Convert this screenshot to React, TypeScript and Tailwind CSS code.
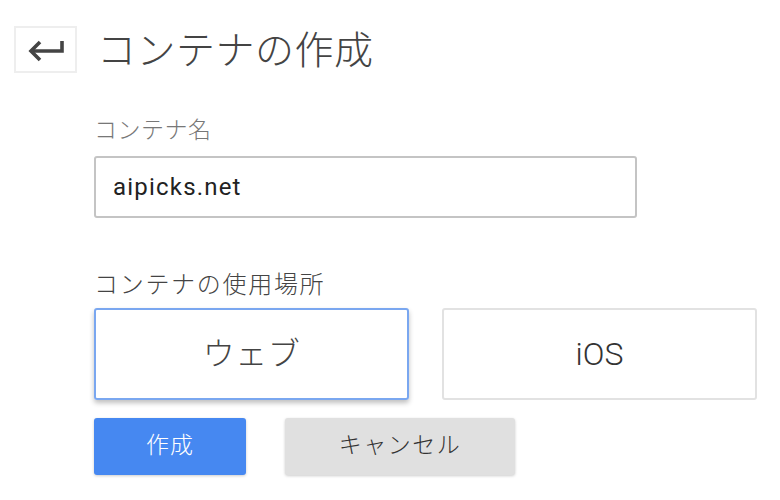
import React from "react";

export default function App() {
  return (
    <div
      className="w-[780px] h-[500px] bg-white overflow-hidden font-light"
      style={{ fontFamily: 'Roboto, "Noto Sans CJK JP", sans-serif' }}
    >
      <div className="flex items-center pt-[26px] pl-[14px]">
        <button className="w-[63px] h-[47px] border-2 border-[#eeeeee] bg-white flex items-center justify-center">
          <svg width="38" height="24" viewBox="0 0 38 24" fill="none">
            <path d="M35 3 V13 H5" stroke="#444" strokeWidth="3.6" strokeLinecap="butt" />
            <path d="M13 4 L4 13 L13 22" stroke="#444" strokeWidth="3.6" strokeLinecap="butt" strokeLinejoin="miter" fill="none" />
          </svg>
        </button>
        <h1 className="ml-[20px] mt-[4px] text-[39px] leading-none text-[#444] tracking-[0.5px]">コンテナの作成</h1>
      </div>

      <div className="pl-[94px]">
        <div className="mt-[46px] text-[23px] leading-none text-[#777] tracking-[0.5px]">コンテナ名</div>
        <div className="mt-[14px] w-[543px] h-[62px] border-2 border-[#c4c4c4] rounded-[3px] flex items-center pl-[17px] text-[24px] font-normal text-[#222] tracking-[1.2px]">
          aipicks.net
        </div>

        <div className="mt-[55px] text-[24px] leading-none text-[#444] tracking-[1.7px]">コンテナの使用場所</div>
        <div className="mt-[11px] flex gap-[33px]">
          <div className="w-[315px] h-[92px] border-2 border-[#7aa7f0] rounded-[3px] flex items-center justify-center text-[32px] text-[#444] tracking-[0.5px] shadow-[0_3px_5px_rgba(0,0,0,0.25)]">
            ウェブ
          </div>
          <div className="w-[315px] h-[92px] border-2 border-[#e2e2e2] rounded-[3px] flex items-center justify-center text-[32px] text-[#333]">
            iOS
          </div>
        </div>

        <div className="mt-[18px] flex gap-[39px]">
          <button className="w-[152px] h-[57px] bg-[#4688f1] rounded-[3px] text-white text-[23px] tracking-[1px] shadow-[0_1px_3px_rgba(0,0,0,0.2)]">
            作成
          </button>
          <button className="w-[230px] h-[57px] bg-[#e0e0e0] rounded-[3px] text-[#333] text-[23px] tracking-[1.5px] shadow-[0_1px_3px_rgba(0,0,0,0.2)]">
            キャンセル
          </button>
        </div>
      </div>
    </div>
  );
}
